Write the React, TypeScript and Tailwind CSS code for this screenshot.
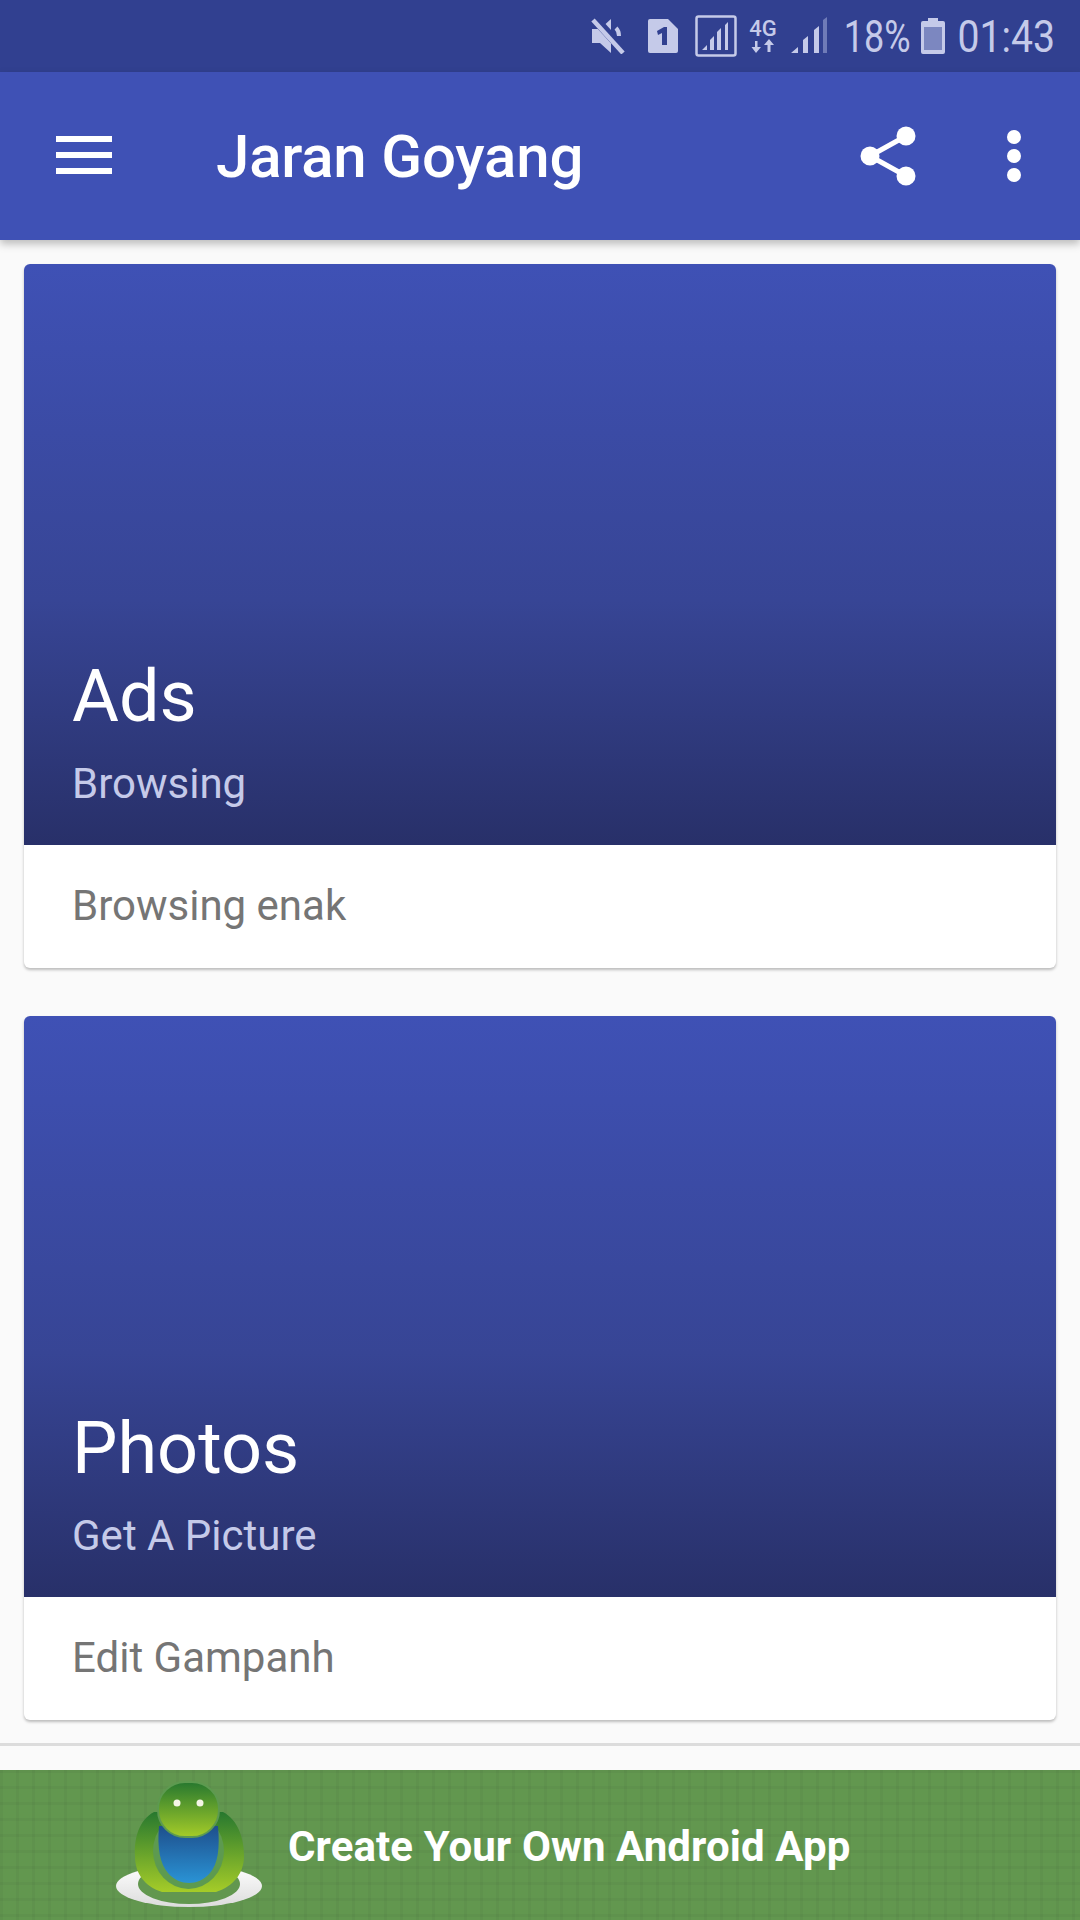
import React from 'react';

const roboto = { fontFamily: 'Roboto, "Liberation Sans", sans-serif' };

const StatusBar = () => (
  <div className="h-[72px] bg-[#314090] flex items-center justify-end pr-[25px] text-[#c5cae9]">
    <svg width="34" height="36" viewBox="0 0 34 36" className="mr-[22px]">
      <path d="M1 11h8L20 1v34L9 25H1z" fill="#c5cae9" />
      <path d="M25 10c2 2 3 5 3 8" fill="none" stroke="#c5cae9" strokeWidth="4" />
      <path d="M3 0l31 34" stroke="#314090" strokeWidth="9" />
      <path d="M2 2l30 33" stroke="#c5cae9" strokeWidth="4.500" />
    </svg>
    <svg width="32" height="36" viewBox="0 0 32 36" className="mr-[16px]">
      <path d="M3 1h18l10 10v22a2 2 0 0 1-2 2H3a2 2 0 0 1-2-2V3a2 2 0 0 1 2-2z" fill="#c5cae9" />
      <path d="M10 13l7-4h3v18h-5V15l-4 2z" fill="#314090" />
    </svg>
    <svg width="42" height="42" viewBox="0 0 42 42" className="mr-[11px]" fill="#c5cae9">
      <rect x="1.500" y="1.500" width="39" height="39" rx="2" fill="none" stroke="#c5cae9" strokeWidth="2.500" />
      <path d="M7 35l5-5v5zM15 35V25l4-4v14zM22 35V17l4-4v22zM30 35V10l3-3v28z" />
    </svg>
    <div className="w-[30px] h-[36px] mr-[13px] flex flex-col items-center">
      <span style={roboto} className="text-[22px] leading-[21px] font-medium">4G</span>
      <svg width="24" height="14" viewBox="0 0 24 14" fill="#c5cae9">
        <path d="M6.500 2v6H10l-5 6-4.500-6H4V2zM18 0l5 6h-3.500v7h-3V6H13z" />
      </svg>
    </div>
    <svg width="36" height="38" viewBox="0 0 36 38" className="mr-[16px]" fill="#c5cae9">
      <path d="M0 36l7-6v6zM12 36V23l5-4v17zM23 36V13l5-4v27z" />
      <path d="M32 36V3l4-3v36z" fill="#6f7bb8" />
    </svg>
    <div className="w-[68px] mr-[10px] flex justify-end">
      <span style={roboto} className="text-[45px] leading-none origin-right scale-x-[0.8] whitespace-nowrap">18%</span>
    </div>
    <svg width="24" height="36" viewBox="0 0 24 36" className="mr-[13px]">
      <path d="M7 0h10v3h5a2 2 0 0 1 2 2v29a2 2 0 0 1-2 2H2a2 2 0 0 1-2-2V5a2 2 0 0 1 2-2h5z" fill="#c5cae9" />
      <rect x="3" y="9" width="18" height="23" fill="#7c87c0" />
    </svg>
    <div className="w-[97px] flex justify-end">
      <span style={roboto} className="text-[45px] leading-none origin-right scale-x-[0.87] whitespace-nowrap">01:43</span>
    </div>
  </div>
);

const AppBar = () => (
  <div className="relative z-10 h-[168px] bg-[#3f51b5] flex items-center shadow-[0_4px_8px_rgba(0,0,0,0.25)]">
    <div className="ml-[56px] mb-[2px] w-[56px] flex flex-col gap-[10px]">
      <div className="h-[6px] bg-white" />
      <div className="h-[6px] bg-white" />
      <div className="h-[6px] bg-white" />
    </div>
    <h1 style={roboto} className="ml-[104px] mt-[2px] text-[60px] leading-none font-medium tracking-[-0.2px] text-white whitespace-nowrap">
      Jaran Goyang
    </h1>
    <div className="ml-auto flex items-center">
      <svg width="56" height="60" viewBox="0 0 56 60" fill="white" className="mr-[91px]">
        <circle cx="10" cy="30" r="9.500" />
        <circle cx="46" cy="10" r="9.500" />
        <circle cx="46" cy="50" r="9.500" />
        <path d="M10 30L46 10M10 30L46 50" stroke="white" strokeWidth="5" />
      </svg>
      <div className="mr-[59px] flex flex-col gap-[5px]">
        <div className="w-[14px] h-[14px] rounded-full bg-white" />
        <div className="w-[14px] h-[14px] rounded-full bg-white" />
        <div className="w-[14px] h-[14px] rounded-full bg-white" />
      </div>
    </div>
  </div>
);

const Card = ({ title, subtitle, body }: { title: string; subtitle: string; body: string }) => (
  <div style={roboto} className="mx-[24px] h-[704px] rounded-[6px] bg-white overflow-hidden flex flex-col shadow-[0_2px_3px_rgba(0,0,0,0.25)]">
    <div className="h-[581px] bg-gradient-to-b from-[#3f51b5] via-[#374595] via-58% to-[#283069] flex flex-col justify-end px-[48px] pb-[37px]">
      <div className="text-[72px] leading-[84px] text-white">{title}</div>
      <div className="mt-[21px] text-[42px] leading-[48px] text-[#c5cae9]">{subtitle}</div>
    </div>
    <div className="flex-1 px-[48px] flex items-center pb-[2px] text-[42px] text-[#757575]">{body}</div>
  </div>
);

const AppLogo = () => (
  <svg width="150" height="130" viewBox="0 0 150 130">
    <defs>
      <linearGradient id="g1" x1="0" y1="0" x2="0" y2="1">
        <stop offset="0" stopColor="#27782f" />
        <stop offset="1" stopColor="#a5cc28" />
      </linearGradient>
      <linearGradient id="b1" x1="0" y1="0" x2="0" y2="1">
        <stop offset="0" stopColor="#1e4f8c" />
        <stop offset="1" stopColor="#2a93d5" />
      </linearGradient>
      <linearGradient id="w1" x1="0" y1="0" x2="0" y2="1">
        <stop offset="0" stopColor="#ffffff" />
        <stop offset="1" stopColor="#dcdcdc" />
      </linearGradient>
    </defs>
    <ellipse cx="75" cy="106" rx="73" ry="21" fill="url(#w1)" />
    <ellipse cx="75" cy="104" rx="51" ry="20" fill="#62974f" />
    <path d="M40 32C25 40 20 58 21 76c0 17 9 30 27 36h54c18-6 28-19 28-36 0-18-6-36-21-44z" fill="url(#g1)" />
    <ellipse cx="74.500" cy="71" rx="35.500" ry="38" fill="#5d9a50" />
    <path d="M45 46h59c2 22 0 38-8 47-6 7-14 10-21 10s-15-3-21-10c-8-9-11-25-9-47z" fill="url(#b1)" />
    <rect x="44" y="2" width="61" height="55" rx="27" fill="url(#g1)" stroke="#5d9a50" strokeWidth="2" />
    <circle cx="63" cy="23" r="3.500" fill="#f5f5e6" />
    <circle cx="86" cy="23" r="3.500" fill="#f5f5e6" />
  </svg>
);

const Banner = () => (
  <div className="h-[150px] bg-[#62974f] bg-[linear-gradient(rgba(0,0,0,0.03)_3px,transparent_3px),linear-gradient(90deg,rgba(0,0,0,0.03)_3px,transparent_3px)] bg-[size:16px_16px] flex items-center">
    <div className="ml-[114px] shrink-0">
      <AppLogo />
    </div>
    <span style={roboto} className="ml-[24px] mt-[3px] text-[42px] leading-none font-bold tracking-[0.1px] text-white whitespace-nowrap">
      Create Your Own Android App
    </span>
  </div>
);

export default function App() {
  return (
    <div className="w-[1080px] h-[1920px] overflow-hidden bg-[#fafafa] flex flex-col">
      <StatusBar />
      <AppBar />
      <div className="pt-[24px] flex flex-col gap-[48px]">
        <Card title="Ads" subtitle="Browsing" body="Browsing enak" />
        <Card title="Photos" subtitle="Get A Picture" body="Edit Gampanh" />
      </div>
      <div className="mt-[23px] h-[3px] bg-[#dcdcdc]" />
      <div className="flex-1" />
      <Banner />
    </div>
  );
}
